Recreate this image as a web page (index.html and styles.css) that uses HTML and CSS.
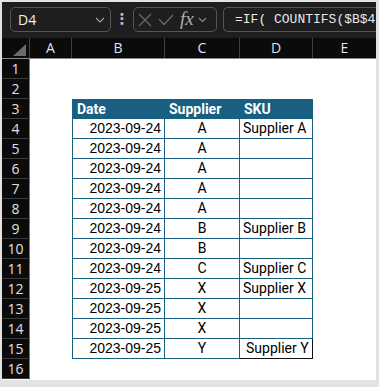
FILE: index.html
```html
<!DOCTYPE html>
<html>
<head>
<meta charset="utf-8">
<link rel="stylesheet" href="styles.css">
</head>
<body>
<div class="frame">
  <div class="toolbar">
    <div class="namebox">
      <span class="name">D4</span>
      <svg class="chev" width="10" height="6" viewBox="0 0 10 6"><path d="M1 1 L5 5 L9 1" fill="none" stroke="#a0a0a0" stroke-width="1.2"/></svg>
    </div>
    <div class="dots">⋮</div>
    <div class="fxbox">
      <svg width="14" height="14" viewBox="0 0 14 14"><path d="M1 1 L13 13 M13 1 L1 13" stroke="#6a6a6a" stroke-width="1.2"/></svg>
      <svg width="16" height="12" viewBox="0 0 16 12"><path d="M1 5 L6 10.5 L15 1" fill="none" stroke="#6a6a6a" stroke-width="1.2"/></svg>
      <span class="fx">fx</span>
      <svg width="9" height="6" viewBox="0 0 9 6"><path d="M1 1 L4.5 4.5 L8 1" fill="none" stroke="#8a8a8a" stroke-width="1.1"/></svg>
    </div>
    <div class="formula">=IF( COUNTIFS($B$4</div>
  </div>
  <div class="sheet">
    <div class="hrow">
      <div class="corner"><svg width="13" height="12" viewBox="0 0 13 12"><path d="M13 0 L13 12 L0 12 Z" fill="#6b6b6b"/></svg></div>
      <div class="ch">A</div><div class="ch">B</div><div class="ch">C</div><div class="ch">D</div><div class="ch last">E</div>
    </div>
    <div class="row"><div class="rh">1</div><div></div><div></div><div></div><div></div><div></div></div>
    <div class="row"><div class="rh">2</div><div></div><div></div><div></div><div></div><div></div></div>
    <div class="row"><div class="rh">3</div><div></div><div class="th b">Date</div><div class="th c">Supplier</div><div class="th d">SKU</div><div></div></div>
    <div class="row"><div class="rh">4</div><div></div><div class="td b">2023-09-24</div><div class="td c">A</div><div class="td d">Supplier A</div><div></div></div>
    <div class="row"><div class="rh">5</div><div></div><div class="td b">2023-09-24</div><div class="td c">A</div><div class="td d"></div><div></div></div>
    <div class="row"><div class="rh">6</div><div></div><div class="td b">2023-09-24</div><div class="td c">A</div><div class="td d"></div><div></div></div>
    <div class="row"><div class="rh">7</div><div></div><div class="td b">2023-09-24</div><div class="td c">A</div><div class="td d"></div><div></div></div>
    <div class="row"><div class="rh">8</div><div></div><div class="td b">2023-09-24</div><div class="td c">A</div><div class="td d"></div><div></div></div>
    <div class="row"><div class="rh">9</div><div></div><div class="td b">2023-09-24</div><div class="td c">B</div><div class="td d">Supplier B</div><div></div></div>
    <div class="row"><div class="rh">10</div><div></div><div class="td b">2023-09-24</div><div class="td c">B</div><div class="td d"></div><div></div></div>
    <div class="row"><div class="rh">11</div><div></div><div class="td b">2023-09-24</div><div class="td c">C</div><div class="td d">Supplier C</div><div></div></div>
    <div class="row"><div class="rh">12</div><div></div><div class="td b">2023-09-25</div><div class="td c">X</div><div class="td d">Supplier X</div><div></div></div>
    <div class="row"><div class="rh">13</div><div></div><div class="td b">2023-09-25</div><div class="td c">X</div><div class="td d"></div><div></div></div>
    <div class="row"><div class="rh">14</div><div></div><div class="td b">2023-09-25</div><div class="td c">X</div><div class="td d"></div><div></div></div>
    <div class="row"><div class="rh">15</div><div></div><div class="td b">2023-09-25</div><div class="td c">Y</div><div class="td d lastsku">Supplier Y</div><div></div></div>
    <div class="row"><div class="rh">16</div><div></div><div></div><div></div><div></div><div></div></div>
  </div>
</div>
</body>
</html>
```

FILE: styles.css
```css
* { box-sizing: border-box; }
html, body { margin: 0; padding: 0; }
body { background: #e4e3e4; width: 379px; height: 387px; overflow: hidden; }
.frame { padding: 2px 3px 0 2px; }
.toolbar {
  height: 36px; background: #1e1e1e; display: flex; align-items: flex-start;
  padding: 5px 0 0 8px; overflow: hidden; white-space: nowrap;
}
.namebox {
  width: 101px; height: 25px; border: 1px solid #555; border-radius: 5px;
  display: flex; align-items: center; justify-content: space-between;
  padding: 0 5px 0 7px; flex: none;
}
.name { font-family: "Open Sans", sans-serif; font-size: 14px; color: #f0f0f0; }
.dots { width: 22px; flex: none; text-align: center; color: #bbb; font-family: "DejaVu Sans", sans-serif; font-size: 15px; font-weight: bold; line-height: 25px; }
.fxbox {
  width: 84px; height: 25px; border: 1px solid #555; border-radius: 5px; flex: none;
  display: flex; align-items: center; gap: 6px; padding: 0 0 0 4px;
}
.fx { font-family: "Liberation Serif", serif; font-style: italic; font-size: 19px; color: #b0b0b0; line-height: 1; margin-top: -3px; margin-right: -2px; }
.formula {
  margin-left: 6px; flex: 1; height: 25px; border: 1px solid #555; border-right: none;
  border-radius: 5px 0 0 5px; padding: 0 0 0 11px;
  font-family: "Liberation Mono", monospace; font-size: 13px; line-height: 23px; color: #e8e8e8; overflow: hidden;
}
.sheet { background: #fff; height: 342px; }
.hrow, .row { display: grid; grid-template-columns: 28px 42px 93px 75px 73px 1fr; }
.hrow { height: 21px; background: #0b0b0b; border-bottom: 1px solid #8a8a8a; }
.corner { display: flex; align-items: flex-end; justify-content: flex-end; padding: 0 3px 2px 0; border-right: 1px solid #444; }
.ch {
  border-right: 1px solid #3e3e3e; text-align: center; color: #dde4f0;
  font-family: "Open Sans", sans-serif; font-size: 14px; line-height: 20px;
}
.ch.last { border-right: none; }
.row { height: 20px; }
.rh {
  background: #0b0b0b; color: #e0e0e0; text-align: center; border-right: 1px solid #777;
  border-bottom: 1px solid #3a3a3a; font-family: "Open Sans", sans-serif; font-size: 14px; line-height: 19px;
}
.th {
  background: #185f82; color: #fff; font-family: Roboto, sans-serif; font-weight: bold;
  font-size: 14px; line-height: 20px; padding-left: 4px; white-space: nowrap;
}
.th.b { padding-left: 4px; }
.td {
  border-right: 1px solid #185f82; border-bottom: 1px solid #185f82; color: #000;
  font-size: 14px; line-height: 19px; white-space: nowrap; overflow: hidden;
}
.td.b, .th.b { border-left: 1px solid #185f82; }
.td.b { font-family: "Liberation Sans", Arial, sans-serif; text-align: right; padding-right: 3px; }
.td.c { font-family: Roboto, sans-serif; text-align: center; }
.td.d { font-family: Roboto, sans-serif; padding-left: 3px; }
.td.lastsku { padding-left: 6px; border-right-color: #111; border-bottom-color: #111; }
```
